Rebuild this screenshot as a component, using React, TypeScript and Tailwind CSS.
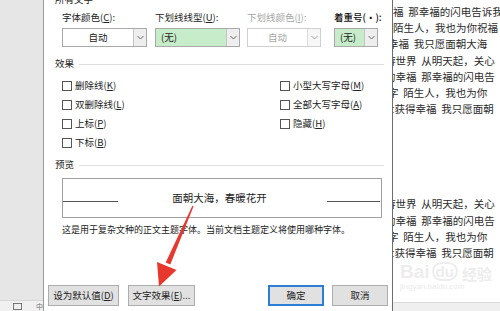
import React from "react";

const FONT = { fontFamily: '"Noto Sans CJK SC", "Noto Sans", sans-serif' };

const Key = ({ k }: { k: string }) => (
  <>
    (<span className="underline underline-offset-1">{k}</span>)
  </>
);

const Chevron = ({ light }: { light?: boolean }) => (
  <svg width="7" height="5" viewBox="0 0 7 5" fill="none">
    <path d="M0.5 1 L3.5 4 L6.5 1" stroke={light ? "#a8a8a8" : "#6b6b6b"} strokeWidth="1" />
  </svg>
);

interface DropProps {
  value: string;
  width: string;
  green?: boolean;
  disabled?: boolean;
}

const Dropdown = ({ value, width, green, disabled }: DropProps) => (
  <div
    className={`${width} h-[19px] flex border ${disabled ? "border-[#cfcfcf]" : "border-[#a9a9a9]"} ${
      green ? "bg-[#c7ecca]" : "bg-white"
    }`}
  >
    <div
      className={`flex-1 flex items-center text-[9.5px] ${green ? "justify-start pl-[5px]" : "justify-center"} ${
        disabled ? "text-[#a6a6a6]" : "text-[#222]"
      }`}
    >
      {value}
    </div>
    <div
      className={`w-[13px] flex items-center justify-center border-l ${
        disabled ? "border-[#dcdcdc] bg-[#f7f7f7]" : "border-[#c4c4c4] bg-[#eeeeee]"
      }`}
    >
      <Chevron light={disabled} />
    </div>
  </div>
);

const Check = ({ children }: { children: React.ReactNode }) => (
  <div className="h-[19px] flex items-center gap-[3px] text-[9.5px] text-[#222]">
    <div className="w-[10px] h-[10px] border border-[#555] bg-white" />
    <span>{children}</span>
  </div>
);

const SectionHead = ({ title }: { title: string }) => (
  <div className="h-[12px] flex items-center gap-[5px] pl-[11px] pr-[8px]">
    <span className="text-[9.5px] text-[#222] leading-none">{title}</span>
    <div className="flex-1 h-px bg-[#dedede]" />
  </div>
);

const Btn = ({ children, primary, w }: { children: React.ReactNode; primary?: boolean; w: string }) => (
  <div
    className={`${w} h-[21px] flex items-center justify-center text-[9.5px] text-[#222] bg-[#e1e1e1] ${
      primary ? "border-2 border-[#2a7fd4]" : "border border-[#adadad]"
    }`}
  >
    {children}
  </div>
);

// poem lines as they show on the page behind the dialog (left part is hidden)
const docTop = [
  { t: "福\u00a0\u00a0那幸福的闪电告诉我", ml: "ml-[0px]" },
  { t: "陌生人，我也为你祝福", ml: "ml-[0px]" },
  { t: "幸福\u00a0\u00a0我只愿面朝大海", ml: "ml-[-5px]" },
  { t: "游世界\u00a0\u00a0从明天起，关心", ml: "ml-[-8px]" },
  { t: "的幸福\u00a0\u00a0那幸福的闪电告", ml: "ml-[-8px]" },
  { t: "字\u00a0\u00a0陌生人，我也为你", ml: "ml-[-5px]" },
  { t: "世获得幸福\u00a0\u00a0我只愿面朝", ml: "ml-[-9px]" },
];

const docBottom = docTop.slice(3);

const App = () => {
  return (
    <div className="relative w-[500px] h-[311px] overflow-hidden flex bg-[#e7e7e7]" style={FONT}>
      {/* word window left strip */}
      <div className="w-[43px] h-full flex flex-col">
        <div className="flex-1 bg-[#e6e6e6]" />
        <div className="h-[11px] bg-[#f0f0f0] border-t border-[#d8d8d8] flex items-center gap-[14px] pl-[13px]">
          <div className="w-[9px] h-[7px] border border-[#777]" />
          <span className="text-[7px] text-[#777] leading-none">中</span>
        </div>
      </div>

      {/* font dialog */}
      <div className="w-[350px] h-full bg-white border-l border-[#9a9a9a] border-r border-r-[#6d6d6d] flex flex-col">
        <div className="h-[4px] flex items-end pl-[11px]">
          <span className="text-[9.5px] leading-[10px] text-[#222]">所有文字</span>
        </div>

        {/* labels */}
        <div className="mt-[8px] h-[12px] flex items-center pl-[18px] text-[9.5px] leading-none">
          <span className="w-[93px] text-[#222]">
            字体颜色<Key k="C" />:
          </span>
          <span className="w-[92px] text-[#222]">
            下划线线型<Key k="U" />:
          </span>
          <span className="w-[87px] text-[#a6a6a6]">
            下划线颜色<Key k="I" />:
          </span>
          <span className="text-[#111] font-medium">着重号(·):</span>
        </div>

        {/* dropdowns */}
        <div className="mt-[4px] flex pl-[18px]">
          <Dropdown value="自动" width="w-[85px]" />
          <div className="w-[8px]" />
          <Dropdown value="(无)" width="w-[85px]" green />
          <div className="w-[7px]" />
          <Dropdown value="自动" width="w-[74px]" disabled />
          <div className="w-[13px]" />
          <Dropdown value="(无)" width="w-[44px]" green />
        </div>

        <div className="mt-[11px]">
          <SectionHead title="效果" />
        </div>

        {/* checkboxes */}
        <div className="mt-[6px] flex pl-[18px]">
          <div className="w-[218px] flex flex-col">
            <Check>
              删除线<Key k="K" />
            </Check>
            <Check>
              双删除线<Key k="L" />
            </Check>
            <Check>
              上标<Key k="P" />
            </Check>
            <Check>
              下标<Key k="B" />
            </Check>
          </div>
          <div className="flex flex-col">
            <Check>
              小型大写字母<Key k="M" />
            </Check>
            <Check>
              全部大写字母<Key k="A" />
            </Check>
            <Check>
              隐藏<Key k="H" />
            </Check>
          </div>
        </div>

        <div className="mt-[7px]">
          <SectionHead title="预览" />
        </div>

        {/* preview box */}
        <div className="mt-[7px] ml-[18px] w-[320px] h-[40px] border border-[#a0a0a0] flex items-center">
          <div className="w-[55px] h-px bg-[#555] mt-[6px]" />
          <div className="flex-1 flex justify-center text-[10.5px] text-[#222] pr-[6px]">面朝大海，春暖花开</div>
          <div className="w-[53px] h-px bg-[#555] mt-[6px] mr-[1px]" />
        </div>

        <div className="mt-[5px] h-[12px] flex items-center pl-[18px] text-[9px] text-[#222] leading-none">
          这是用于复杂文种的正文主题字体。当前文档主题定义将使用哪种字体。
        </div>

        {/* buttons */}
        <div className="mt-[50px] flex pl-[4px]">
          <Btn w="w-[71px]">
            设为默认值<Key k="D" />
          </Btn>
          <div className="w-[9px]" />
          <Btn w="w-[67px]">
            文字效果<Key k="E" />...
          </Btn>
          <div className="w-[73px]" />
          <Btn w="w-[56px]" primary>
            确定
          </Btn>
          <div className="w-[8px]" />
          <Btn w="w-[56px]">取消</Btn>
        </div>
      </div>

      {/* document page */}
      <div className="flex-1 h-full flex flex-col overflow-hidden">
        <div className="flex-1 bg-white pt-[4px] text-[10.5px] leading-[16.2px] text-[#2b2b2b] whitespace-nowrap">
          {docTop.map((l, i) => (
            <div key={i} className={l.ml}>
              {l.t}
            </div>
          ))}
          <div className="mt-[79px]">
            {docBottom.map((l, i) => (
              <div key={i} className={l.ml}>
                {l.t}
              </div>
            ))}
          </div>
        </div>
        <div className="h-[9px] bg-[#efefef] border-t border-[#dadada]" />
      </div>

      {/* baidu watermark */}
      <div className="absolute left-[400px] top-[262px] flex flex-col items-start opacity-60 pointer-events-none">
        <div className="flex items-end gap-[2px] leading-none">
          <span className="text-[19px] font-bold text-[#e2e2e2]" style={{ fontFamily: '"Liberation Sans", sans-serif' }}>
            Bai
          </span>
          <span className="text-[15px] font-bold text-[#e2e2e2] border-2 border-[#e2e2e2] rounded-full px-[2px]" style={{ fontFamily: '"Liberation Sans", sans-serif' }}>
            du
          </span>
          <span className="text-[15px] font-bold text-[#e2e2e2] ml-[2px]">经验</span>
        </div>
        <span className="text-[8px] text-[#dcdcdc] leading-none mt-[2px]" style={{ fontFamily: '"Liberation Sans", sans-serif' }}>
          jingyan.baidu.com
        </span>
      </div>

      {/* red annotation arrow */}
      <svg className="absolute left-0 top-0 pointer-events-none" width="500" height="311" viewBox="0 0 500 311">
        <polygon points="193.6,206.2 192.4,205.8 165.7,262.5 170.3,264.5" fill="#e8372c" />
        <polygon points="176.5,270 157,262 159,286.5" fill="#e8372c" />
      </svg>
    </div>
  );
};

export default App;
